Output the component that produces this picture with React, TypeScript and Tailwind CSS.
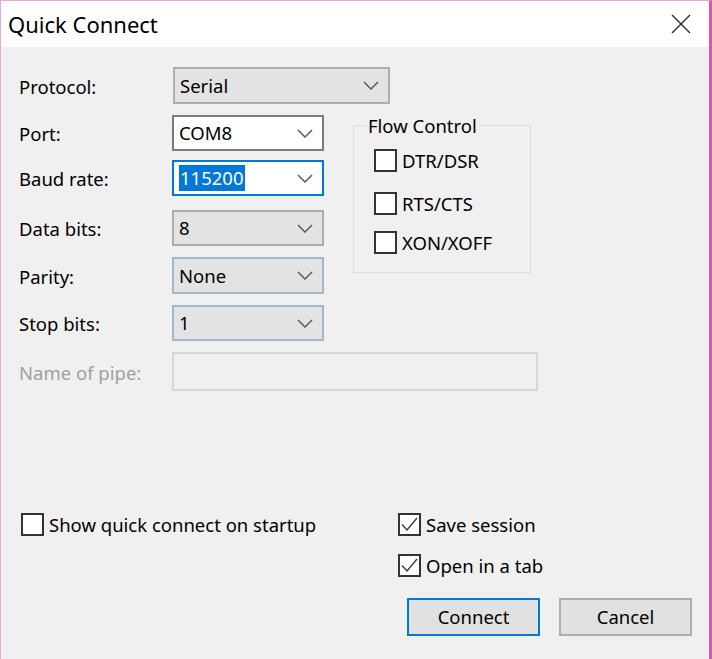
import React from "react"

type SelectProps = {
  value: string
  width: string
  tone: "gray" | "white" | "focus" | "blue"
  tall?: boolean
}

function Chevron() {
  return (
    <svg width="16" height="9" viewBox="0 0 16 9" className="shrink-0">
      <polyline points="1,1 8,8 15,1" fill="none" stroke="#5a5a5a" strokeWidth="1.5" />
    </svg>
  )
}

function Select({ value, width, tone, tall }: SelectProps) {
  const box =
    tone === "white"
      ? "bg-white border-[#7a7a7a]"
      : tone === "focus"
        ? "bg-white border-[#0078d7]"
        : tone === "blue"
          ? "bg-[#e3e3e3] border-[#a3b8cb]"
          : "bg-[#e3e3e3] border-[#adadad]"
  return (
    <div className={`${width} ${tall ? "h-[37px]" : "h-[36px]"} border-2 ${box} flex items-center justify-between pl-[5px] pr-[9px]`}>
      {tone === "focus" ? (
        <span className="bg-[#0078d7] text-white leading-[26px] h-[26px] px-px">{value}</span>
      ) : (
        <span>{value}</span>
      )}
      <Chevron />
    </div>
  )
}

function Checkbox({ label, checked }: { label: string; checked?: boolean }) {
  return (
    <div className="flex items-center h-[23px]">
      <div className="size-[23px] border-2 border-[#333333] bg-white shrink-0 flex items-center justify-center">
        {checked && (
          <svg width="19" height="19" viewBox="0 0 19 19">
            <polyline points="2,9.5 7,15 17,3" fill="none" stroke="#3a3a3a" strokeWidth="1.4" />
          </svg>
        )}
      </div>
      <span className="ml-[5px] whitespace-nowrap">{label}</span>
    </div>
  )
}

function Row({ label, children, className = "" }: { label: string; children: React.ReactNode; className?: string }) {
  return (
    <div className={`flex items-center ${className}`}>
      <span className="w-[153px] shrink-0 pt-[2px]">{label}</span>
      {children}
    </div>
  )
}

export default function App() {
  return (
    <div className="w-[712px] h-[659px] overflow-hidden bg-[#f0f0f0] border-l border-t border-[#eaa8d8] border-r-[3px] border-r-[#cc5cb4] font-['Noto_Sans',sans-serif] text-[18.5px] text-black">
      {/* Title bar */}
      <div className="h-[46px] bg-white flex items-center justify-between pl-[7px] pr-[18px]">
        <span className="text-[22px] leading-none">Quick Connect</span>
        <svg width="20" height="20" viewBox="0 0 20 20">
          <path d="M1 1 L19 19 M19 1 L1 19" stroke="#2b2b2b" strokeWidth="1.4" />
        </svg>
      </div>

      <div className="pl-[18px] pt-[20px]">
        <Row label="Protocol:">
          <div className="ml-px">
            <Select value="Serial" width="w-[217px]" tone="gray" tall />
          </div>
        </Row>

        <div className="flex mt-[11px]">
          <div className="w-[305px]">
            <Row label="Port:">
              <Select value="COM8" width="w-[152px]" tone="white" />
            </Row>
            <Row label="Baud rate:" className="mt-[9px]">
              <Select value="115200" width="w-[152px]" tone="focus" />
            </Row>
            <Row label="Data bits:" className="mt-[14px]">
              <Select value="8" width="w-[152px]" tone="gray" />
            </Row>
            <Row label="Parity:" className="mt-[11px]">
              <Select value="None" width="w-[152px]" tone="blue" tall />
            </Row>
            <Row label="Stop bits:" className="mt-[11px]">
              <Select value="1" width="w-[152px]" tone="blue" />
            </Row>
          </div>

          {/* Flow Control group */}
          <div className="relative ml-[29px] mt-[10px] w-[178px] h-[148px] border border-[#dcdcdc] pl-[20px] pt-[23px]">
            <span className="absolute -top-[14px] left-[12px] bg-[#f0f0f0] px-[2px]">Flow Control</span>
            <Checkbox label="DTR/DSR" />
            <div className="mt-[20px]">
              <Checkbox label="RTS/CTS" />
            </div>
            <div className="mt-[16px]">
              <Checkbox label="XON/XOFF" />
            </div>
          </div>
        </div>

        <Row label="Name of pipe:" className="mt-[11px] text-[#a0a0a0]">
          <div className="w-[366px] h-[39px] border-2 border-[#d6d6d6] bg-[#f0f0f0]" />
        </Row>

        {/* Bottom options */}
        <div className="flex mt-[122px]">
          <div className="w-[379px] pl-[2px]">
            <Checkbox label="Show quick connect on startup" />
          </div>
          <div className="flex flex-col">
            <Checkbox label="Save session" checked />
            <div className="mt-[18px]">
              <Checkbox label="Open in a tab" checked />
            </div>
          </div>
        </div>

        <div className="flex justify-end gap-[19px] mt-[21px] pr-[17px]">
          <button type="button" className="w-[133px] h-[38px] border-2 border-[#0078d7] bg-[#e1e1e1]">
            Connect
          </button>
          <button type="button" className="w-[133px] h-[38px] border-2 border-[#adadad] bg-[#e1e1e1]">
            Cancel
          </button>
        </div>
      </div>
    </div>
  )
}
